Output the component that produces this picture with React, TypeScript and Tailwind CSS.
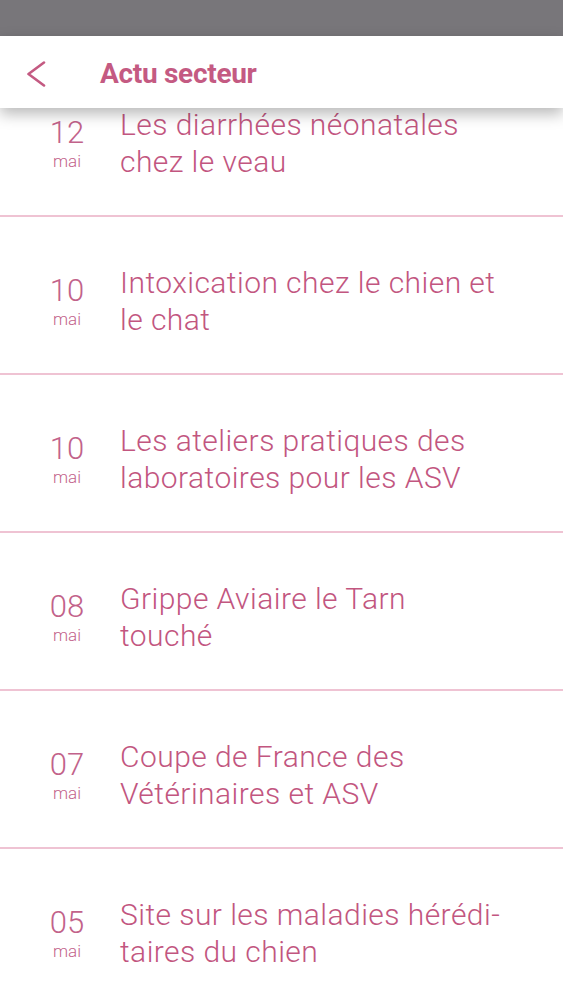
const items = [
  { day: "12", title: ["Les diarrhées néonatales", "chez le veau"] },
  { day: "10", title: ["Intoxication chez le chien et", "le chat"] },
  { day: "10", title: ["Les ateliers pratiques des", "laboratoires pour les ASV"] },
  { day: "08", title: ["Grippe Aviaire le Tarn", "touché"] },
  { day: "07", title: ["Coupe de France des", "Vétérinaires et ASV"] },
  { day: "05", title: ["Site sur les maladies hérédi-", "taires du chien"] },
];

export default function App() {
  return (
    <div className="h-[1000px] overflow-hidden bg-white font-['Roboto',sans-serif]">
      <div className="h-9 bg-[#78767a]" />
      <header className="relative z-10 flex h-[72px] items-center bg-white pt-[4px] shadow-[0_6px_14px_rgba(0,0,0,0.28)]">
        <svg className="ml-[25px] h-[26px] w-[22px]" viewBox="0 0 22 26" fill="none">
          <polyline points="19,1.5 3.5,13 19,24.5" stroke="#c45a82" strokeWidth="2.6" strokeLinecap="round" strokeLinejoin="round" />
        </svg>
        <h1 className="ml-[53px] text-[28px] font-bold tracking-[-0.3px] text-[#c45a82]">Actu secteur</h1>
      </header>
      <ul className="-mt-[49px]">
        {items.map((item, i) => (
          <li key={i} className="flex h-[158px] border-b-2 border-[#efc3d3] pt-[47px]">
            <div className="flex w-[120px] flex-col items-center pl-[14px] pt-[12px] text-[#c2628a]">
              <span className="text-[31px] font-light leading-[30px]">{item.day}</span>
              <span className="mt-[4px] text-[17px] font-light leading-[18px]">mai</span>
            </div>
            <div className="text-[30px] font-light leading-[37px] tracking-[0.45px] text-[#c2567f]">
              {item.title.map((line, j) => (
                <div key={j}>{line}</div>
              ))}
            </div>
          </li>
        ))}
      </ul>
    </div>
  );
}
